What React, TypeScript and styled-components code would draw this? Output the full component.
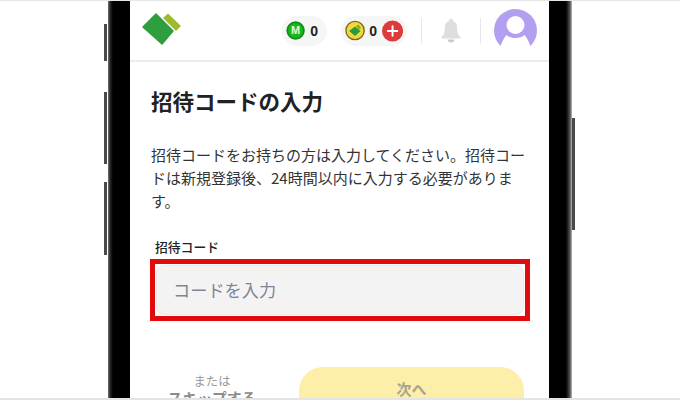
import React from "react";
import styled, { createGlobalStyle } from "styled-components";

const Global = createGlobalStyle`
  html, body { margin: 0; padding: 0; background: #fff; }
  body { font-family: "Noto Sans CJK JP", "Noto Sans", sans-serif; }
  #root { width: 680px; height: 400px; overflow: hidden; }
`;

const Stage = styled.div`
  width: 680px;
  height: 400px;
  box-sizing: border-box;
  background: #fff;
  border-top: 1px solid #e6e6e6;
  border-bottom: 2px solid #e4e4e4;
  display: flex;
  justify-content: center;
  overflow: hidden;
`;

const Phone = styled.div`
  display: flex;
  width: 464px;
  height: 100%;
`;

const Bezel = styled.div<{ $side: "left" | "right" }>`
  position: relative;
  flex: none;
  width: ${(p) => (p.$side === "left" ? 22 : 23)}px;
  background: ${(p) =>
    p.$side === "left"
      ? "linear-gradient(90deg, #777 0, #2a2a2a 2px, #000 5px, #000 100%)"
      : "linear-gradient(270deg, #bbb 0, #555 2px, #000 6px, #000 100%)"};
`;

const SideKey = styled.span<{ $side: "left" | "right"; $top: number; $h: number }>`
  position: absolute;
  width: 3px;
  top: ${(p) => p.$top}px;
  height: ${(p) => p.$h}px;
  background: #4a4a4a;
  ${(p) => (p.$side === "left" ? "left: -4px;" : "right: -3px;")}
`;

const Screen = styled.div`
  flex: 1;
  min-width: 0;
  display: flex;
  flex-direction: column;
  background: #fff;
`;

const Header = styled.header`
  height: 61px;
  flex: none;
  box-sizing: border-box;
  border-bottom: 2px solid #ececec;
  padding: 0 12px;
  display: flex;
  align-items: center;
`;

const Logo = styled.svg`
  width: 40px;
  height: 33px;
  flex: none;
  margin-top: -2px;
`;

const Right = styled.div`
  margin-left: auto;
  display: flex;
  align-items: center;
`;

const Pill = styled.div<{ $w: number }>`
  width: ${(p) => p.$w}px;
  height: 30px;
  border-radius: 15px;
  background: #f6f6f6;
  display: flex;
  align-items: center;
  box-sizing: border-box;
  padding: 0 4px;
  margin-right: 14px;
`;

const Count = styled.span`
  font-family: "Liberation Sans", sans-serif;
  font-weight: 700;
  font-size: 14px;
  line-height: 16px;
  color: #222;
  width: 8px;
  margin: 0 5px;
`;

const CoinCount = styled(Count)`
  margin: 0 5px 0 4px;
`;

const Divider = styled.span`
  width: 1px;
  height: 26px;
  background: #e8e8e8;
`;

const Bell = styled.svg`
  width: 20px;
  height: 25px;
  margin: 0 19px;
`;

const Avatar = styled.svg`
  width: 44px;
  height: 38px;
  margin-left: 12px;
  margin-top: -6px;
`;

const Body = styled.main`
  flex: 1;
  padding: 23px 20px 0 21px;
  color: #222;
`;

const Title = styled.h1`
  margin: 0;
  font-size: 21.5px;
  line-height: 32px;
  font-weight: 700;
  color: #212121;
`;

const Lead = styled.p`
  margin: 26px 0 0;
  font-size: 15px;
  line-height: 23px;
  font-weight: 400;
  color: #333;
`;

const Label = styled.label`
  display: block;
  margin: 25.5px 0 0 4px;
  font-size: 12.8px;
  line-height: 18px;
  font-weight: 500;
  color: #222;
`;

const Highlight = styled.div`
  margin: 3px 0 0 -1px;
  width: 380px;
  height: 62px;
  box-sizing: border-box;
  border: 5px solid #e20a0a;
  padding: 1px;
  display: flex;
`;

const CodeInput = styled.input`
  flex: 1;
  min-width: 0;
  border: 1px solid #ebebeb;
  border-radius: 8px;
  background: #f3f3f3;
  padding: 0 16px;
  font-family: inherit;
  font-size: 17.2px;
  outline: none;
  &::placeholder { color: #7f8594; opacity: 1; }
`;

const Actions = styled.div`
  margin-top: 46px;
  display: flex;
  align-items: flex-start;
`;

const Skip = styled.div`
  width: 122px;
  margin-right: 26px;
  text-align: center;
  flex: none;
`;

const SkipHint = styled.div`
  font-size: 12.3px;
  line-height: 16px;
  color: #9a9a9a;
  margin-top: 6px;
`;

const SkipLabel = styled.div`
  font-size: 14.8px;
  line-height: 18px;
  font-weight: 700;
  color: #8c8c8c;
  white-space: nowrap;
`;

const Next = styled.button`
  width: 225px;
  height: 60px;
  border: none;
  border-radius: 24px;
  background: #fdeeaa;
  color: #a9a48c;
  font-family: inherit;
  font-size: 15px;
  font-weight: 700;
  display: flex;
  justify-content: center;
  padding: 11px 0 0;
`;

export default function App() {
  return (
    <>
      <Global />
      <Stage>
        <Phone>
          <Bezel $side="left">
            <SideKey $side="left" $top={23} $h={37} />
            <SideKey $side="left" $top={91} $h={72} />
            <SideKey $side="left" $top={181} $h={73} />
          </Bezel>
          <Screen>
            <Header>
              <Logo viewBox="0 0 40 33">
                <polygon points="14,1 31,18 20,31 1,14" fill="#2f9e3f" stroke="#2f9e3f" strokeWidth="1.5" strokeLinejoin="round" />
                <polygon points="21,5 26,0.500 39,13 34,18" fill="#9dbb2e" />
              </Logo>
              <Right>
                <Pill $w={45}>
                  <svg width="21" height="21" viewBox="0 0 22 22">
                    <circle cx="11" cy="11" r="10.500" fill="#0d8f14" />
                    <circle cx="11" cy="11" r="8.500" fill="#17b81c" />
                    <text x="11" y="15.500" textAnchor="middle" fontSize="12.500" fontWeight="700" fontFamily="Liberation Sans" fill="#e6f7d8">M</text>
                  </svg>
                  <Count>0</Count>
                </Pill>
                <Pill $w={66}>
                  <svg width="21" height="21" viewBox="0 0 22 22">
                    <circle cx="11" cy="11" r="10" fill="#f2d740" stroke="#7d6b16" strokeWidth="1.500" />
                    <polygon points="4.500,11.500 11,6.500 17,11.500 11,17" fill="#2c9a3a" />
                    <polygon points="12,6 14.500,4.500 17.500,8 15.500,10" fill="#7fae2a" />
                  </svg>
                  <CoinCount>0</CoinCount>
                  <svg width="22" height="22" viewBox="0 0 22 22">
                    <circle cx="11" cy="11" r="11" fill="#dd3b3b" />
                    <path d="M11 6v10M6 11h10" stroke="#fff" strokeWidth="2" strokeLinecap="round" />
                  </svg>
                </Pill>
                <Divider />
                <Bell viewBox="0 0 20 25">
                  <path d="M10 0.500c1.200 0 2 .8 2 2v.6c2.800 .9 4.200 3.400 4.200 6.600 0 5 1 7 3.300 9.500v1.300H.5v-1.300c2.300-2.500 3.300-4.500 3.300-9.500 0-3.200 1.400-5.700 4.200-6.600v-.6c0-1.200 .8-2 2-2z" fill="#dedede" />
                  <path d="M6.500 21.500h7c-.3 1.800-1.700 3-3.500 3s-3.200-1.200-3.500-3z" fill="#c9c9c9" />
                </Bell>
                <Divider />
                <Avatar viewBox="0 0 44 38">
                  <circle cx="22.500" cy="21.500" r="21.500" fill="#b39ff0" />
                  <circle cx="22.500" cy="16" r="9" fill="#fff" />
                  <path d="M7 38.500C9 33 11 29 13.500 26C17 30 28 30 31.500 26C34 29 36 33 38 38.500Z" fill="#fff" />
                </Avatar>
              </Right>
            </Header>
            <Body>
              <Title>招待コードの入力</Title>
              <Lead>
                招待コードをお持ちの方は入力してください。招待コードは新規登録後、24時間以内に入力する必要があります。
              </Lead>
              <Label htmlFor="invite">招待コード</Label>
              <Highlight>
                <CodeInput id="invite" placeholder="コードを入力" />
              </Highlight>
              <Actions>
                <Skip>
                  <SkipHint>または</SkipHint>
                  <SkipLabel>スキップする</SkipLabel>
                </Skip>
                <Next>次へ</Next>
              </Actions>
            </Body>
          </Screen>
          <Bezel $side="right">
            <SideKey $side="right" $top={117} $h={112} />
          </Bezel>
        </Phone>
      </Stage>
    </>
  );
}
